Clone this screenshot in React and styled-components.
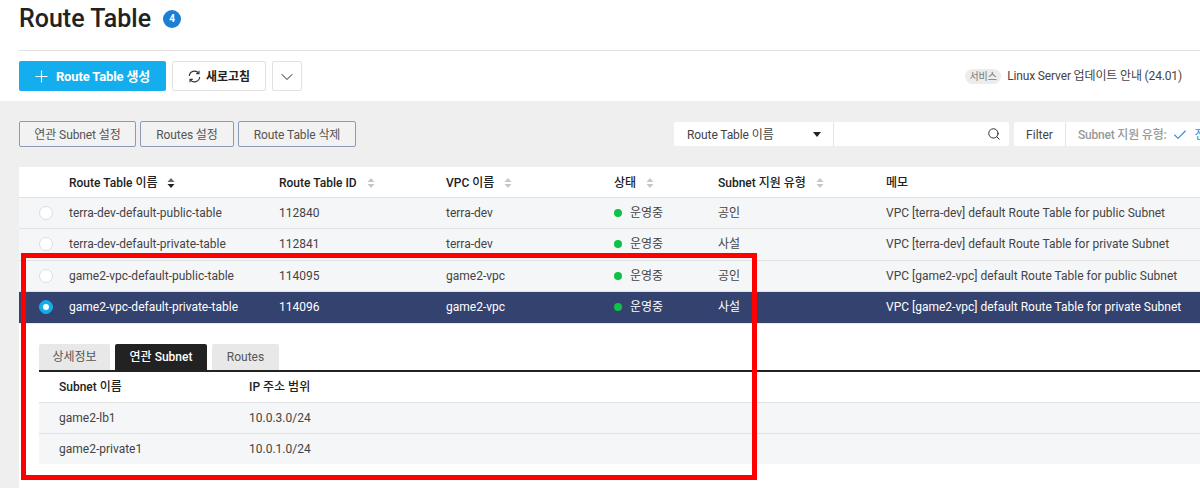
import React from "react";
import styled, { createGlobalStyle } from "styled-components";
import { Plus, ChevronDown, Search, Check } from "lucide-react";

const Global = createGlobalStyle`
  html, body { margin: 0; padding: 0; height: 488px; overflow: hidden; background: #fff; }
  * { box-sizing: border-box; }
  body { font-family: Roboto, "Noto Sans CJK KR", sans-serif; font-size: 12px; line-height: 16px; color: #333; }
`;
const Page = styled.div`position: relative; width: 1200px; height: 488px; overflow: hidden; background: #efefef;`;
const Header = styled.header`height: 101px; background: #fff; padding: 0 0 0 19px;`;
const TitleRow = styled.div`height: 51px; border-bottom: 1px solid #e1e1e1; display: flex; align-items: flex-start; padding-top: 4px; gap: 12px;`;
const Title = styled.h1`margin: 0; font-size: 25px; line-height: 30px; font-weight: 500; color: #222;`;
const Count = styled.span`width: 18px; height: 18px; margin-top: 6px; border-radius: 50%; background: #1b7fd6; color: #fff; font-size: 10px; font-weight: 700; display: flex; align-items: center; justify-content: center;`;
const Toolbar = styled.div`display: flex; align-items: center; gap: 6px; padding-top: 10px; padding-right: 18px;`;
const Primary = styled.button`height: 30px; width: 147px; border: 0; border-radius: 2px; background: #14aeee; color: #fff; font: 700 13px/16px Roboto, "Noto Sans CJK KR", sans-serif; letter-spacing: -0.15px; display: flex; align-items: center; justify-content: center; gap: 5px; padding: 1px 3px 0 0;`;
const Ghost = styled.button`height: 30px; width: ${p => p.$w}px; border: 1px solid #e1e1e1; border-radius: 2px; background: #fff; color: #222; font: 700 12px/16px Roboto, "Noto Sans CJK KR", sans-serif; display: flex; align-items: center; justify-content: center; gap: 5px; padding: 1px 0 0;`;
const Notice = styled.div`margin-left: auto; display: flex; align-items: center; gap: 6px; color: #444; font-size: 12px; letter-spacing: -0.15px;`;
const Tag = styled.span`height: 15px; width: 36px; text-align: center; border-radius: 8px; background: #ececec; color: #777; font-size: 10px; line-height: 15px; letter-spacing: 0;`;
const Controls = styled.div`height: 66px; padding: 20px 0 0 19px; display: flex; align-items: flex-start;`;
const Actions = styled.div`display: flex; gap: 4px; flex: none;`;
const ActionBtn = styled.button`height: 26px; width: ${p => p.$w}px; border: 1px solid #8a9cb5; border-radius: 2px; background: #f2f2f2; color: #555; font: 400 12px/16px Roboto, "Noto Sans CJK KR", sans-serif; letter-spacing: -0.1px; padding: 1px 0 0;`;
const SearchWrap = styled.div`margin-left: 318px; margin-top: 1px; height: 24px; display: flex; flex: none; background: #fff; border-radius: 2px; width: 335px;`;
const Select = styled.div`width: 160px; border-right: 1px solid #e5e5e5; display: flex; align-items: center; justify-content: space-between; padding: 1px 12px 0 13px; color: #444; letter-spacing: -0.1px;`;
const Caret = styled.i`width: 0; height: 0; border-left: 4px solid transparent; border-right: 4px solid transparent; border-top: 5px solid #222;`;
const SearchField = styled.div`flex: 1; display: flex; align-items: center; justify-content: flex-end; padding-right: 8px; color: #222;`;
const FilterWrap = styled.div`margin-left: 5px; margin-top: 1px; height: 24px; width: 186px; flex: none; background: #fff; border-radius: 2px 0 0 2px; display: flex; align-items: center; overflow: hidden; white-space: nowrap;`;
const FilterLabel = styled.div`width: 52px; flex: none; height: 100%; border-right: 1px solid #e5e5e5; display: flex; align-items: center; justify-content: center; padding-top: 1px; color: #444;`;
const FilterValue = styled.div`padding: 1px 0 0 12px; flex: none; display: flex; align-items: center; gap: 6px; color: #999; font-weight: 500; letter-spacing: -0.2px;`;
const CheckText = styled.span`color: #2f8ad8; font-weight: 400; display: flex; align-items: center; gap: 6px;`;
const TableWrap = styled.section`margin-left: 19px; background: #fff; height: 321px;`;
const cols = "50px 210px 167px 168px 104px 168px 1fr";
const HeadRow = styled.div`display: grid; grid-template-columns: ${cols}; height: 31px; padding-top: 1px; align-items: center; border-bottom: 1px solid #e1e1e1; font-weight: 500; color: #222; background: #fff;`;
const Row = styled.div`display: grid; grid-template-columns: ${cols}; height: ${p => p.$on ? "32px" : "31.33px"}; align-items: center; white-space: nowrap; border-bottom: 1px solid ${p => p.$on ? "#e8e8e8" : "#e1e1e1"}; background: ${p => p.$on ? "#34426f" : "#f5f6f8"}; color: ${p => p.$on ? "#fff" : "#444"};`;
const HeadCell = styled.div`display: flex; align-items: center; gap: 10px;`;
const RadioCell = styled.div`display: flex; justify-content: flex-end; padding-right: 16.5px;`;
const Radio = styled.span`width: 14px; height: 14px; border-radius: 50%; background: ${p => p.$on ? "#14aeee" : "#fff"}; border: 1px solid ${p => p.$on ? "#14aeee" : "#ddd"}; display: flex; align-items: center; justify-content: center; &::after { content: ""; display: ${p => p.$on ? "block" : "none"}; width: 6px; height: 6px; border-radius: 50%; background: #fff; }`;
const Status = styled.div`display: flex; align-items: center; gap: 8px;`;
const Dot = styled.i`width: 8px; height: 8px; border-radius: 50%; background: #0cc247;`;
const Detail = styled.div`padding: 20px 0 0 20px;`;
const Tabs = styled.div`display: flex; gap: 5px; height: 28px; border-bottom: 2px solid #222;`;
const Tab = styled.div`height: 26px; width: ${p => p.$w}px; border-radius: 2px 2px 0 0; display: flex; align-items: center; justify-content: center; background: ${p => p.$on ? "#222" : "#e8e8e8"}; color: ${p => p.$on ? "#fff" : "#555"}; font-weight: ${p => p.$on ? 500 : 400};`;
const subCols = "190px 1fr";
const SubHead = styled.div`display: grid; grid-template-columns: ${subCols}; height: 31px; padding: 1px 0 0 20px; align-items: center; font-weight: 500; color: #222; border-bottom: 1px solid #e1e1e1;`;
const SubRow = styled.div`display: grid; grid-template-columns: ${subCols}; height: ${p => p.$last ? 30 : 31}px; padding-left: 20px; align-items: center; background: #f5f6f8; color: #444; border-bottom: ${p => p.$last ? "0" : "1px solid #e1e1e1"};`;
const Highlight = styled.div`position: absolute; left: 21px; top: 253px; width: 736px; height: 227px; border: 5px solid #ff0000; pointer-events: none;`;

const Sort = ({ active }) => (
  <svg width="8" height="10" viewBox="0 0 8 10">
    <path d="M4 0 7.5 4H.5z" fill={active ? "#666" : "#c6c6c6"} />
    <path d="M4 10 7.5 6H.5z" fill={active ? "#222" : "#c6c6c6"} />
  </svg>
);
const Refresh = () => (
  <svg width="13" height="13" viewBox="0 0 13 13" fill="none" stroke="#333" strokeWidth="1.1">
    <path d="M1.3 6A5.2 5.2 0 0 1 10.6 3.2" />
    <path d="M11.7 7A5.2 5.2 0 0 1 2.4 9.8" />
    <path d="M11 .8v2.8H8.2" />
    <path d="M2 12.2V9.4h2.8" />
  </svg>
);

const rows = [
  ["terra-dev-default-public-table", "112840", "terra-dev", "공인", "VPC [terra-dev] default Route Table for public Subnet"],
  ["terra-dev-default-private-table", "112841", "terra-dev", "사설", "VPC [terra-dev] default Route Table for private Subnet"],
  ["game2-vpc-default-public-table", "114095", "game2-vpc", "공인", "VPC [game2-vpc] default Route Table for public Subnet"],
  ["game2-vpc-default-private-table", "114096", "game2-vpc", "사설", "VPC [game2-vpc] default Route Table for private Subnet"],
];

export default function App() {
  return (
    <Page>
      <Global />
      <Header>
        <TitleRow>
          <Title>Route Table</Title>
          <Count>4</Count>
        </TitleRow>
        <Toolbar>
          <Primary><Plus size={19} strokeWidth={1.4} />Route Table 생성</Primary>
          <Ghost $w={94}><Refresh />새로고침</Ghost>
          <Ghost $w={30}><ChevronDown size={20} strokeWidth={1.2} /></Ghost>
          <Notice><Tag>서비스</Tag>Linux Server 업데이트 안내 (24.01)</Notice>
        </Toolbar>
      </Header>
      <Controls>
        <Actions>
          <ActionBtn $w={117}>연관 Subnet 설정</ActionBtn>
          <ActionBtn $w={94}>Routes 설정</ActionBtn>
          <ActionBtn $w={118}>Route Table 삭제</ActionBtn>
        </Actions>
        <SearchWrap>
          <Select>Route Table 이름<Caret /></Select>
          <SearchField><Search size={14} strokeWidth={1.6} /></SearchField>
        </SearchWrap>
        <FilterWrap>
          <FilterLabel>Filter</FilterLabel>
          <FilterValue>Subnet 지원 유형:<CheckText><Check size={16} strokeWidth={1.6} />전체</CheckText></FilterValue>
        </FilterWrap>
      </Controls>
      <TableWrap>
        <HeadRow>
          <div />
          <HeadCell>Route Table 이름<Sort active /></HeadCell>
          <HeadCell>Route Table ID<Sort /></HeadCell>
          <HeadCell>VPC 이름<Sort /></HeadCell>
          <HeadCell>상태<Sort /></HeadCell>
          <HeadCell>Subnet 지원 유형<Sort /></HeadCell>
          <HeadCell>메모</HeadCell>
        </HeadRow>
        {rows.map((r, i) => (
          <Row key={r[1]} $on={i === 3}>
            <RadioCell><Radio $on={i === 3} /></RadioCell>
            <div>{r[0]}</div>
            <div>{r[1]}</div>
            <div>{r[2]}</div>
            <Status><Dot />운영중</Status>
            <div>{r[3]}</div>
            <div>{r[4]}</div>
          </Row>
        ))}
        <Detail>
          <Tabs>
            <Tab $w={71}>상세정보</Tab>
            <Tab $w={92} $on>연관 Subnet</Tab>
            <Tab $w={67}>Routes</Tab>
          </Tabs>
          <SubHead><div>Subnet 이름</div><div>IP 주소 범위</div></SubHead>
          <SubRow><div>game2-lb1</div><div>10.0.3.0/24</div></SubRow>
          <SubRow $last><div>game2-private1</div><div>10.0.1.0/24</div></SubRow>
        </Detail>
      </TableWrap>
      <Highlight />
    </Page>
  );
}
